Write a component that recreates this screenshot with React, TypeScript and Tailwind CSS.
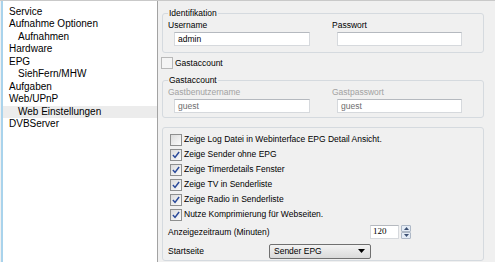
import React from "react";

function CheckBox({ checked, dim }: { checked?: boolean; dim?: boolean }) {
  return (
    <div
      className={
        "w-[12px] h-[12px] shrink-0 border flex items-center justify-center " +
        (dim ? "border-[#b8b8b8] bg-[#f4f4f4]" : "border-[#8e8f8f] bg-gradient-to-br from-[#dcdcdc] to-[#fbfbfb]")
      }
    >
      {checked && (
        <svg width="8" height="8" viewBox="0 0 9 9">
          <path d="M1 4.6 L3.4 7.2 L8 1.2" fill="none" stroke="#2a4a9a" strokeWidth="1.7" />
        </svg>
      )}
    </div>
  );
}

function TextBox({ value, w, dim }: { value?: string; w: string; dim?: boolean }) {
  return (
    <div
      className={
        "h-[14px] bg-white border border-[#d6d9dd] border-t-[#b5b9bf] flex items-center pl-[3px] " +
        w +
        (dim ? " text-[#6d6d6d]" : " text-black")
      }
    >
      {value}
    </div>
  );
}

const tree: { label: string; indent?: boolean; sel?: boolean }[] = [
  { label: "Service" },
  { label: "Aufnahme Optionen" },
  { label: "Aufnahmen", indent: true },
  { label: "Hardware" },
  { label: "EPG" },
  { label: "SiehFern/MHW", indent: true },
  { label: "Aufgaben" },
  { label: "Web/UPnP" },
  { label: "Web Einstellungen", indent: true, sel: true },
  { label: "DVBServer" },
];

const opts: { label: string; checked: boolean }[] = [
  { label: "Zeige Log Datei in Webinterface EPG Detail Ansicht.", checked: false },
  { label: "Zeige Sender ohne EPG", checked: true },
  { label: "Zeige Timerdetails Fenster", checked: true },
  { label: "Zeige TV in Senderliste", checked: true },
  { label: "Zeige Radio in Senderliste", checked: true },
  { label: "Nutze Komprimierung für Webseiten.", checked: true },
];

export default function App() {
  return (
    <div className="w-[495px] h-[262px] bg-[#f0f0f0] flex overflow-hidden text-black font-['Liberation_Sans',sans-serif] text-[8.5px] border-t border-[#c9c9c9]">
      <div className="w-[157px] h-full bg-white border-l-2 border-l-[#a9d3ec] border-r border-r-[#a3a3a3] ml-[1px] pt-[5px] text-[10px]">
        {tree.map((t) => (
          <div
            key={t.label}
            className={
              "h-[12.45px] leading-[12.45px] whitespace-nowrap " +
              (t.indent ? "pl-[15px] " : "pl-[6px] ") +
              (t.sel ? "bg-[#ececec]" : "")
            }
          >
            {t.label}
          </div>
        ))}
      </div>

      <div className="flex-1 pl-[4px] pr-[11px] pt-[5px] flex flex-col">
        <fieldset className="border border-[#d5dadf] rounded-[3px] h-[47px] px-[5px]">
          <legend className="px-[1px] leading-[14px]">Identifikation</legend>
          <div className="flex">
            <div className="w-[164px]">
              <div className="leading-[11px]">Username</div>
              <TextBox value="admin" w="w-[136px] ml-[6px] mt-[1px]" />
            </div>
            <div>
              <div className="leading-[11px]">Passwort</div>
              <TextBox w="w-[125px] ml-[5px] mt-[1px]" />
            </div>
          </div>
        </fieldset>

        <div className="flex items-center gap-[2px] h-[20px] -ml-[1px]">
          <CheckBox dim />
          <span>Gastaccount</span>
        </div>

        <fieldset className="border border-[#d5dadf] rounded-[3px] h-[45px] px-[5px]">
          <legend className="px-[1px] leading-[14px]">Gastaccount</legend>
          <div className="flex text-[#a2a2a2]">
            <div className="w-[164px]">
              <div className="leading-[11px]">Gastbenutzername</div>
              <TextBox value="guest" dim w="w-[136px] ml-[6px] mt-[1px]" />
            </div>
            <div>
              <div className="leading-[11px]">Gastpasswort</div>
              <TextBox value="guest" dim w="w-[125px] ml-[5px] mt-[1px]" />
            </div>
          </div>
        </fieldset>

        <div className="mt-[9px] border border-[#d5dadf] rounded-[3px] h-[134px] pl-[7px] pt-[4px]">
          {opts.map((o) => (
            <div key={o.label} className="flex items-center h-[15px] gap-[2px] whitespace-nowrap">
              <CheckBox checked={o.checked} />
              <span>{o.label}</span>
            </div>
          ))}
          <div className="flex items-center h-[18px] mt-[1px]">
            <span className="w-[202px] -ml-[2px]">Anzeigezeitraum (Minuten)</span>
            <div className="w-[29px] h-[14px] bg-white border border-[#d6d9dd] border-t-[#b5b9bf] pl-[2px] flex items-center font-['Liberation_Serif',serif] text-[9px]">
              120
            </div>
            <div className="ml-[2px] flex flex-col gap-0">
              <div className="w-[10px] h-[7px] border border-[#aeb8c6] bg-[#e4ecf6] rounded-[1px] flex items-center justify-center">
                <svg width="5" height="3" viewBox="0 0 5 3"><path d="M0 3 L2.5 0 L5 3 Z" fill="#3b4f72" /></svg>
              </div>
              <div className="w-[10px] h-[7px] border border-[#aeb8c6] bg-[#e4ecf6] rounded-[1px] flex items-center justify-center">
                <svg width="5" height="3" viewBox="0 0 5 3"><path d="M0 0 L2.5 3 L5 0 Z" fill="#3b4f72" /></svg>
              </div>
            </div>
          </div>
          <div className="flex items-center h-[20px]">
            <span className="w-[101px] -ml-[2px]">Startseite</span>
            <div className="w-[102px] h-[15px] rounded-[2px] border border-[#707070] bg-gradient-to-b from-[#f3f3f3] to-[#dadada] flex items-center pl-[4px] pr-[5px] justify-between">
              <span>Sender EPG</span>
              <svg width="7" height="4" viewBox="0 0 7 4"><path d="M0 0 L7 0 L3.5 4 Z" fill="#000" /></svg>
            </div>
          </div>
        </div>
      </div>
    </div>
  );
}
